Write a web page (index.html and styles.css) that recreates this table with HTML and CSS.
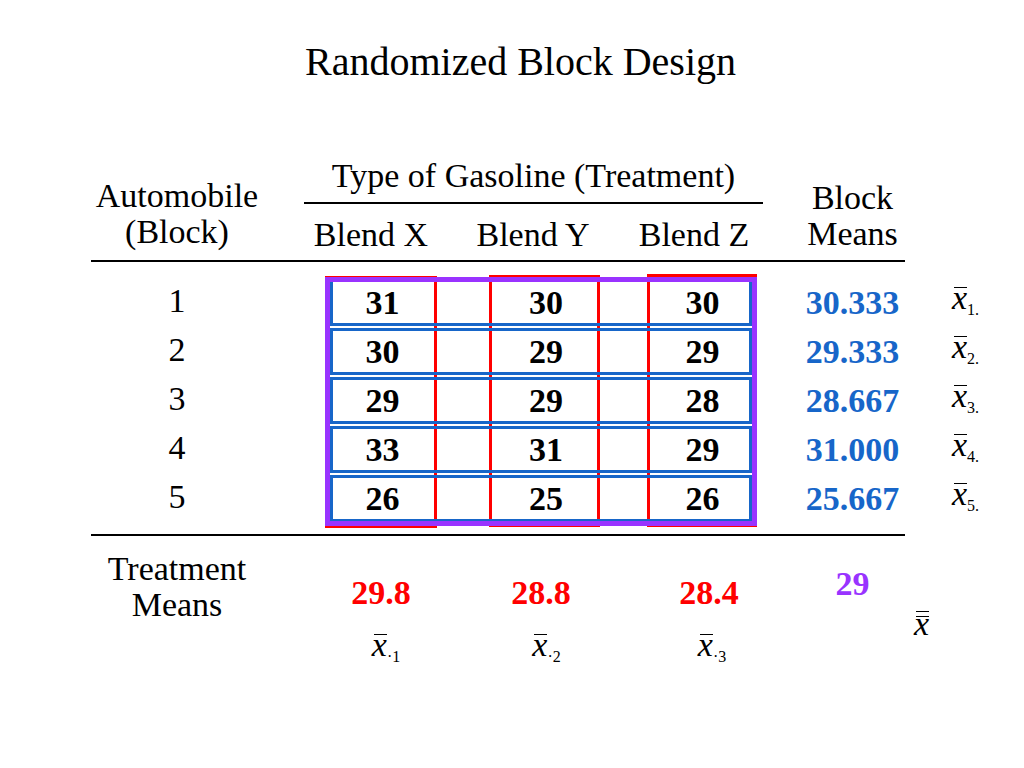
FILE: index.html
```html
<!DOCTYPE html>
<html>
<head>
<meta charset="utf-8">
<title>Randomized Block Design</title>
<link rel="stylesheet" href="styles.css">
</head>
<body>
<div class="slide">
  <h1 class="title">Randomized Block Design</h1>

  <div class="head cols">
    <div class="auto">Automobile<br>(Block)</div>
    <div class="type">Type of Gasoline (Treatment)</div>
    <div class="bmeans">Block<br>Means</div>
    <div class="blend bx">Blend X</div>
    <div class="blend by">Blend Y</div>
    <div class="blend bz">Blend Z</div>
  </div>
  <div class="rule"></div>

  <div class="data">
    <div class="rows">
      <div class="row cols"><div class="lab">1</div><div class="v c1">31</div><div class="v c2">30</div><div class="v c3">30</div><div class="mean">30.333</div><div class="xb"><span class="x">x</span><span class="sub">1.</span></div></div>
      <div class="row cols"><div class="lab">2</div><div class="v c1">30</div><div class="v c2">29</div><div class="v c3">29</div><div class="mean">29.333</div><div class="xb"><span class="x">x</span><span class="sub">2.</span></div></div>
      <div class="row cols"><div class="lab">3</div><div class="v c1">29</div><div class="v c2">29</div><div class="v c3">28</div><div class="mean">28.667</div><div class="xb"><span class="x">x</span><span class="sub">3.</span></div></div>
      <div class="row cols"><div class="lab">4</div><div class="v c1">33</div><div class="v c2">31</div><div class="v c3">29</div><div class="mean">31.000</div><div class="xb"><span class="x">x</span><span class="sub">4.</span></div></div>
      <div class="row cols"><div class="lab">5</div><div class="v c1">26</div><div class="v c2">25</div><div class="v c3">26</div><div class="mean">25.667</div><div class="xb"><span class="x">x</span><span class="sub">5.</span></div></div>
    </div>
    <div class="boxes cols">
      <div class="red k1"></div>
      <div class="red k2"></div>
      <div class="red k3"></div>
      <div class="blue r1"></div>
      <div class="blue r2"></div>
      <div class="blue r3"></div>
      <div class="blue r4"></div>
      <div class="blue r5"></div>
      <div class="purple"></div>
    </div>
  </div>
  <div class="rule rule2"></div>

  <div class="foot cols">
    <div class="tm">Treatment<br>Means</div>
    <div class="tmv c1">29.8</div>
    <div class="tmv c2">28.8</div>
    <div class="tmv c3">28.4</div>
    <div class="grand">29</div>
    <div class="gbar"><span class="x xx">x</span></div>
    <div class="cx c1"><span class="x">x</span><span class="sub">·1</span></div>
    <div class="cx c2"><span class="x">x</span><span class="sub">·2</span></div>
    <div class="cx c3"><span class="x">x</span><span class="sub">·3</span></div>
  </div>
</div>
</body>
</html>
```

FILE: styles.css
```css
html, body {
  margin: 0;
  padding: 0;
  background: #ffffff;
}

body {
  font-family: "Liberation Serif", "Times New Roman", serif;
  color: #000000;
}

.slide {
  width: 1024px;
  height: 768px;
  padding-top: 38px;
  box-sizing: border-box;
  overflow: hidden;
}

.title {
  margin: 0;
  font-size: 40px;
  line-height: 48px;
  font-weight: normal;
  text-align: center;
  padding-left: 17px;
}

/* shared column template: label | gap | X | gap | Y | gap | Z | gap | means | x-bar */
.cols {
  display: grid;
  grid-template-columns: 172px 62px 112px 52px 111px 47px 108px 45px 105px 119px;
  font-size: 34px;
  line-height: 40px;
}

.head,
.data,
.foot,
.rule {
  margin-left: 91px;
  width: 814px;
}

/* ---------- header ---------- */
.head {
  margin-top: 70px;
  grid-template-rows: 48px 56px;
}

.auto {
  grid-column: 1;
  grid-row: 1 / 3;
  align-self: end;
  margin-bottom: 10px;
  line-height: 36px;
  text-align: center;
}

.type {
  grid-column: 3 / 8;
  grid-row: 1;
  align-self: start;
  margin: 0 -8px 0 -21px;
  padding-bottom: 6px;
  border-bottom: 2px solid #000;
  text-align: center;
  white-space: nowrap;
}

.bmeans {
  grid-column: 9;
  grid-row: 1 / 3;
  align-self: end;
  margin-bottom: 8px;
  line-height: 36px;
  text-align: center;
}

.blend {
  grid-row: 2;
  align-self: start;
  margin-top: 11px;
  text-align: center;
  white-space: nowrap;
}

.bx { grid-column: 2 / 5; padding-right: 10px; }
.by { grid-column: 4 / 7; padding-right: 18px; }
.bz { grid-column: 6 / 9; padding-right: 12px; }

.rule {
  height: 2px;
  background: #000;
}

/* ---------- data ---------- */
.data {
  display: grid;
  margin-top: 14px;
}

.rows,
.boxes {
  grid-area: 1 / 1;
}

.row {
  height: 49px;
  align-items: center;
}

.lab {
  grid-column: 1;
  text-align: center;
  padding-bottom: 5px;
}

.c1 { grid-column: 3; }
.c2 { grid-column: 5; }
.c3 { grid-column: 7; }

.v {
  font-weight: bold;
  text-align: center;
  padding-left: 3px;
}

.mean {
  grid-column: 9;
  font-weight: bold;
  color: #1766c9;
  text-align: center;
}

.xb {
  grid-column: 10;
  padding-left: 47px;
  padding-top: 2px;
  white-space: nowrap;
}

/* overlay boxes */
.boxes {
  grid-template-rows: repeat(5, 49px);
  pointer-events: none;
}

.red {
  grid-row: 1 / 6;
  border: 3px solid #ff0000;
  z-index: 1;
}

.k1 { grid-column: 3; margin: 0 0 -7px 0; }
.k2 { grid-column: 5; margin: -1px 0 -6px 0; }
.k3 { grid-column: 7; margin: -2px -2px -6px 0; }

.blue {
  grid-column: 3 / 8;
  border: 3px solid #1766c9;
  margin: 3px 3px -1px 5px;
  z-index: 2;
}

.r1 { grid-row: 1; }
.r2 { grid-row: 2; }
.r3 { grid-row: 3; }
.r4 { grid-row: 4; }
.r5 { grid-row: 5; }

.purple {
  grid-column: 3 / 8;
  grid-row: 1 / 6;
  border: 5px solid #9933ff;
  margin: 1px -2px -5px 0;
  z-index: 3;
}

/* ---------- footer ---------- */
.rule2 {
  margin-top: 13px;
}

.foot {
  margin-top: 15px;
  grid-template-rows: 72px auto;
}

.tm {
  grid-column: 1;
  grid-row: 1;
  line-height: 36px;
  text-align: center;
}

.tmv {
  grid-row: 1;
  align-self: start;
  margin-top: 22px;
  font-weight: bold;
  color: #ff0000;
  text-align: center;
}

.tmv.c2 { padding-right: 7px; }
.tmv.c3 { padding-left: 16px; }

.grand {
  grid-column: 9;
  grid-row: 1;
  align-self: start;
  margin-top: 13px;
  font-weight: bold;
  color: #9933ff;
  text-align: center;
}

.gbar {
  grid-column: 10;
  grid-row: 1 / 3;
  align-self: start;
  margin-top: 53px;
  padding-left: 9px;
}

.cx {
  grid-row: 2;
  align-self: start;
  margin-top: 2px;
  text-align: center;
  white-space: nowrap;
}

.cx.c1 { padding-left: 10px; }
.cx.c2 { padding-left: 4px; }
.cx.c3 { padding-left: 22px; }

/* x-bar notation */
.x {
  position: relative;
  font-style: italic;
}

.x::before {
  content: "";
  position: absolute;
  left: 2px;
  right: 0;
  top: 8px;
  border-top: 1.5px solid #000;
}

.xx::before {
  top: 6px;
}

.xx::after {
  content: "";
  position: absolute;
  left: 2px;
  right: 0;
  top: 11px;
  border-top: 1.5px solid #000;
}

.sub {
  font-size: 16px;
  vertical-align: -6px;
}
```
